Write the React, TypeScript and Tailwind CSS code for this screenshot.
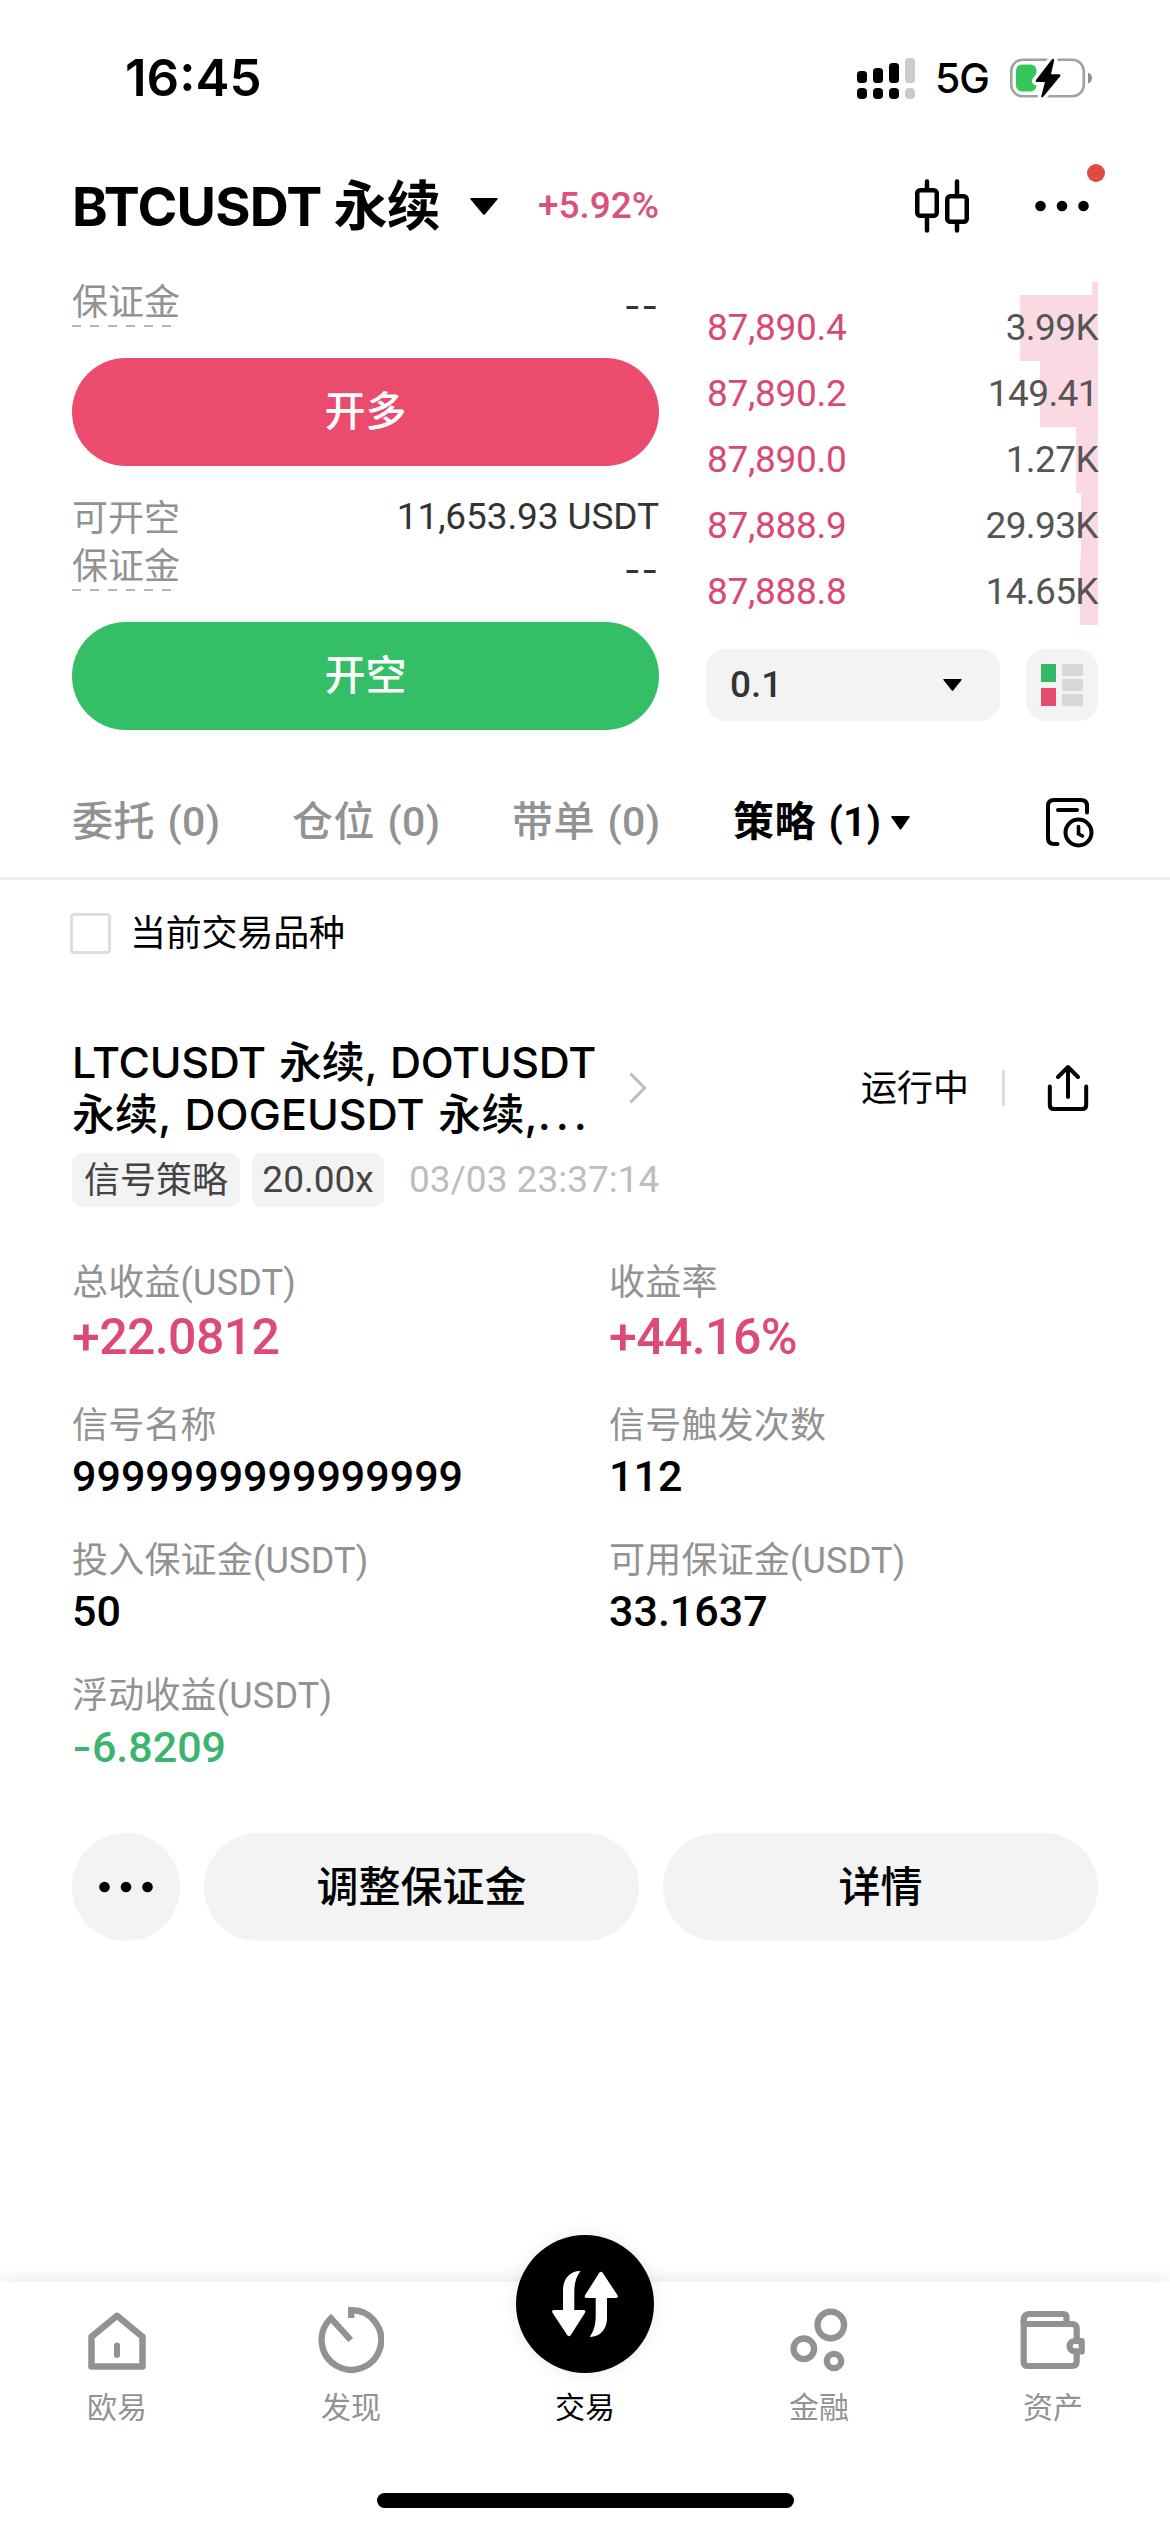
import type { ReactNode } from "react";

function SignalIcon() {
  return (
    <svg className="h-[44px] w-[58px]" viewBox="0 0 58 44">
      <g fill="#000">
        <rect x="0" y="14" width="10" height="12" rx="3.5" />
        <rect x="16" y="11" width="10" height="15" rx="3.5" />
        <rect x="32" y="6" width="10" height="20" rx="3.5" />
        <rect x="0" y="31" width="10" height="11" rx="4" />
        <rect x="16" y="31" width="10" height="11" rx="4" />
        <rect x="32" y="31" width="10" height="11" rx="4" />
      </g>
      <g fill="#cbcbcb">
        <rect x="48" y="1" width="10" height="25" rx="3.5" />
        <rect x="48" y="31" width="10" height="11" rx="4" />
      </g>
    </svg>
  );
}

function BatteryIcon() {
  return (
    <svg className="h-[44px] w-[82px]" viewBox="0 0 82 44">
      <rect x="1.2" y="2.7" width="72.6" height="36.6" rx="11.5" fill="#fff" stroke="#a0a0a0" strokeWidth="2.6" />
      <path d="M78 15.500q4 1.500 4 5.500t-4 5.500z" fill="#8e8e8e" />
      <rect x="6" y="7.500" width="20.500" height="27" rx="6" fill="#35c759" />
      <path
        d="M42 2.200 25.800 23.200q-.8 1.800 1.200 1.800H35L31.200 39.500q.6 1.800 2 .3L50.200 19.200q.9-1.900-1-2H41L44.200 3.200q-.6-2-2.200-1z"
        fill="#000"
        stroke="#fff"
        strokeWidth="7"
        strokeLinejoin="round"
      />
      <path
        d="M42 2.200 25.800 23.200q-.8 1.800 1.200 1.800H35L31.200 39.500q.6 1.800 2 .3L50.200 19.200q.9-1.900-1-2H41L44.200 3.200q-.6-2-2.200-1z"
        fill="#000"
      />
    </svg>
  );
}

function CandlesIcon() {
  return (
    <svg className="h-[54px] w-[54px]" viewBox="0 0 54 54" fill="none" stroke="#000" strokeWidth="4.500" strokeLinecap="round">
      <rect x="2.250" y="11.250" width="19.500" height="25.500" rx="3" />
      <path d="M12 2.500V10M12 38v13.500" />
      <rect x="32.250" y="17.250" width="19.500" height="25.500" rx="3" />
      <path d="M42 2.500V16M42 44v7.500" />
    </svg>
  );
}

function DotsIcon() {
  return (
    <svg className="h-[12px] w-[54px]" viewBox="0 0 54 12">
      <circle cx="5.500" cy="6" r="5.300" />
      <circle cx="27" cy="6" r="5.300" />
      <circle cx="48.500" cy="6" r="5.300" />
    </svg>
  );
}

function Caret({ className }: { className: string }) {
  return (
    <svg className={className} viewBox="0 0 26 17" preserveAspectRatio="none">
      <path d="M1.500 0h23q2 0 .9 1.500L14 16.200q-1 1-2 0L.6 1.500Q-.5 0 1.500 0z" />
    </svg>
  );
}

function HistoryIcon() {
  return (
    <svg className="h-[50px] w-[48px]" viewBox="0 0 48 50" fill="none" stroke="#000" strokeWidth="4" strokeLinecap="round">
      <path d="M11.500 46H8q-6 0-6-6V8q0-6 6-6h27q6 0 6 6v6.500M12 12h19" />
      <circle cx="32.500" cy="34.500" r="13" />
      <path d="M32.500 28.500v7.500l4 2" strokeWidth="3.600" />
    </svg>
  );
}

function ShareIcon() {
  return (
    <svg className="h-[48px] w-[42px]" viewBox="0 0 42 48" fill="none" stroke="#000" strokeWidth="4" strokeLinecap="round">
      <path d="M2.800 22.500V41q0 4 4 4h28.400q4 0 4-4V22.500" />
      <path d="M21 33V3M11 13 21 3l10 10" strokeLinejoin="round" />
    </svg>
  );
}

function HomeIcon() {
  return (
    <svg className="h-[66px] w-[66px]" viewBox="0 0 66 66" fill="none" stroke="#929292" strokeWidth="6.500" strokeLinejoin="round">
      <path d="M7.500 29.800 33 8.800l25.500 21v29.700h-51z" />
      <path d="M33 38.500v9.500" strokeLinecap="round" strokeWidth="6" />
    </svg>
  );
}

function DiscoverIcon() {
  return (
    <svg className="h-[66px] w-[66px]" viewBox="0 0 66 66" fill="none" stroke="#929292" strokeWidth="6.300">
      <path d="M33.200 11V3.200A29.800 29.800 0 1 1 13 11.300L32.700 33" strokeLinejoin="miter" />
    </svg>
  );
}

function FinanceIcon() {
  return (
    <svg className="h-[66px] w-[66px]" viewBox="0 0 66 66" fill="none" stroke="#929292" strokeWidth="6.300">
      <circle cx="44.800" cy="18" r="13.300" />
      <circle cx="17.800" cy="41.800" r="10.300" />
      <circle cx="48" cy="54" r="7.200" />
    </svg>
  );
}

function WalletIcon() {
  return (
    <svg className="h-[66px] w-[68px]" viewBox="0 0 68 66" fill="none" stroke="#929292" strokeWidth="6.200">
      <path d="M4.700 17V13q0-6 6-6h33.500q3.300 0 3.300 3.300V17" />
      <path d="M4.700 12v43q0 4 4 4h44q5 0 5-5V22q0-5-5-5h-48" />
      <path d="M62.700 34v10.400h-7a5.200 5.200 0 0 1 0-10.400z" fill="#fff" strokeLinejoin="round" />
    </svg>
  );
}

function SwapArrows() {
  return (
    <svg className="h-[138px] w-[138px]" viewBox="0 0 138 138" fill="#fff">
      <path d="M64.500 36C53 36 47 45 47 55v20H38q-3 .6-1.500 2.800L51.500 100.500q1.500 1.500 3 0L69 77.800q1-2.300-1-2.800H58.300V57c0-9 2-15.500 6.200-21z" />
      <path d="M73.500 102c11.500 0 17.500-9 17.500-19V63h9q3-.6 1.500-2.800L86.500 37.500q-1.500-1.500-3 0L69 60.200Q68 62.500 70 63h9.700v18c0 9-2 15.500-6.200 21z" />
    </svg>
  );
}

function MarginRow() {
  return (
    <div className="flex h-[45px] items-start justify-between text-[36px] leading-[36px]">
      <div className="flex flex-col gap-[4px] pt-[2px]">
        <span className="text-[#929292]">保证金</span>
        <div className="flex gap-[9px]">
          {[0, 1, 2, 3, 4, 5].map((i) => (
            <div key={i} className="h-[2px] w-[9px] bg-[#b5b5b5]" />
          ))}
        </div>
      </div>
      <span className="pt-[5px] font-['Inter'] tracking-[1px] text-[#333]">--</span>
    </div>
  );
}

const asks = [
  { price: "87,890.4", qty: "3.99K", depth: 78 },
  { price: "87,890.2", qty: "149.41", depth: 58 },
  { price: "87,890.0", qty: "1.27K", depth: 22 },
  { price: "87,888.9", qty: "29.93K", depth: 17 },
  { price: "87,888.8", qty: "14.65K", depth: 18 },
];

function OrderBook() {
  return (
    <div className="flex w-[392px] flex-col pt-[29px]">
      <div className="h-[13px] w-[6px] self-end bg-[#fbd9e3]" />
      {asks.map((a) => (
        <div key={a.price} className="relative flex h-[66px] items-center justify-between pl-[1px] text-[37px]">
          <div className="absolute inset-y-0 right-0 bg-[#fbd9e3]" style={{ width: a.depth }} />
          <span className="tracking-[-0.3px] text-[#d84a73]">{a.price}</span>
          <span className="relative tracking-[-0.6px] text-[#555]">{a.qty}</span>
        </div>
      ))}
      <div className="mt-[24px] flex h-[72px] justify-between">
        <div className="flex w-[294px] items-center justify-between rounded-[20px] bg-[#f3f3f3] pr-[38px] pl-[24px]">
          <span className="text-[37px] font-medium text-[#333]">0.1</span>
          <Caret className="h-[12px] w-[19px]" />
        </div>
        <div className="flex w-[72px] items-center justify-center gap-[6px] rounded-[20px] bg-[#f3f3f3]">
          <div className="flex flex-col gap-[6px]">
            <div className="h-[18px] w-[15px] bg-[#35b968]" />
            <div className="h-[18px] w-[15px] bg-[#e64a6e]" />
          </div>
          <div className="flex flex-col gap-[3px]">
            <div className="h-[12px] w-[21px] bg-[#d8d8d8]" />
            <div className="h-[12px] w-[21px] bg-[#d8d8d8]" />
            <div className="h-[12px] w-[21px] bg-[#d8d8d8]" />
          </div>
        </div>
      </div>
    </div>
  );
}

function Stat({ label, value, className }: { label: string; value: ReactNode; className: string }) {
  return (
    <div className="flex flex-col gap-[4px] pt-px">
      <div className="text-[36px] leading-[44px] tracking-[0.2px] text-[#929292]">{label}</div>
      <div className={className}>{value}</div>
    </div>
  );
}

const big = "text-[50px] leading-[56px] font-medium tracking-[-0.6px] text-[#dc4b74]";
const normal = "text-[43px] leading-[48px] font-medium text-black";
const negative = "text-[43px] leading-[48px] font-medium text-[#3bb56d]";

function NavItem({ icon, label }: { icon: ReactNode; label: string }) {
  return (
    <div className="flex w-[234px] flex-col items-center pt-[25px]">
      {icon}
      <span className="mt-[17px] text-[30px] leading-[36px] text-[#929292]">{label}</span>
    </div>
  );
}

export default function App() {
  return (
    <div className="flex h-[2532px] w-[1170px] flex-col overflow-hidden bg-white font-['Roboto','Noto_Sans_CJK_SC',sans-serif] text-black">
      <div className="flex h-[157px] items-center justify-between pr-[78px] pl-[125px] font-['Inter']">
        <span className="text-[51px] font-semibold">16:45</span>
        <div className="flex items-center">
          <SignalIcon />
          <span className="ml-[20px] text-[41px] font-medium tracking-[-1px]">5G</span>
          <div className="ml-[21px] flex">
            <BatteryIcon />
          </div>
        </div>
      </div>

      <header className="flex h-[96px] items-center justify-between pt-[2px] pr-[81px] pl-[72px]">
        <div className="flex items-center">
          <h1 className="font-['Inter','Noto_Sans_CJK_SC'] text-[54px] font-bold tracking-[-0.8px]">BTCUSDT 永续</h1>
          <Caret className="ml-[30px] h-[17px] w-[28px]" />
          <span className="ml-[40px] text-[37px] font-medium text-[#d9527b]">+5.92%</span>
        </div>
        <div className="flex items-center gap-[66px]">
          <CandlesIcon />
          <div className="relative flex">
            <DotsIcon />
            <div className="absolute -top-[36px] -right-[16px] size-[18px] rounded-full bg-[#df4b41]" />
          </div>
        </div>
      </header>

      <section className="flex h-[513px] justify-between px-[72px]">
        <div className="flex w-[587px] flex-col pt-[30px]">
          <MarginRow />
          <button className="mt-[30px] h-[108px] rounded-full bg-[#eb4b6d] pt-[2px] text-[41px] font-medium text-white">开多</button>
          <div className="mt-[33px] mb-[12px] flex justify-between leading-[36px]">
            <span className="pt-[2px] text-[36px] text-[#929292]">可开空</span>
            <span className="text-[37px] tracking-[-0.1px] text-[#333]">11,653.93 USDT</span>
          </div>
          <div className="-mt-[2px]">
            <MarginRow />
          </div>
          <button className="mt-[30px] h-[108px] rounded-full bg-[#34be66] pt-[2px] text-[41px] font-medium text-white">开空</button>
        </div>
        <OrderBook />
      </section>

      <nav className="flex h-[114px] items-center justify-between border-b-[3px] border-[#eeeeee] pt-[2px] pr-[76px] pl-[72px] text-[41px]">
        <div className="flex items-center gap-[74px] font-medium tracking-[0.4px] text-[#929292] [word-spacing:2px]">
          <span className="w-[146px] whitespace-nowrap">委托 (0)</span>
          <span className="w-[146px] whitespace-nowrap">仓位 (0)</span>
          <span className="w-[147px] whitespace-nowrap">带单 (0)</span>
          <div className="flex items-center gap-[9px] font-semibold whitespace-nowrap text-black">
            <span>策略 (1)</span>
            <Caret className="h-[14px] w-[19px]" />
          </div>
        </div>
        <HistoryIcon />
      </nav>

      <label className="flex h-[106px] items-center gap-[19px] pl-[70px] text-[36px] tracking-[-0.2px]">
        <span className="size-[41px] rounded-[4px] border-[3px] border-[#dedede]" />
        <span className="pt-[2px]">当前交易品种</span>
      </label>

      <article className="flex flex-col px-[72px] pt-[50px]">
        <div className="flex items-center justify-between">
          <div className="flex items-center gap-[33px]">
            <h2 className="w-[524px] font-['Inter','Noto_Sans_CJK_SC'] text-[43px] leading-[52px] font-medium tracking-[-0.3px] [word-spacing:2px] whitespace-nowrap">
              LTCUSDT 永续, DOTUSDT
              <br />
              <span className="tracking-[0.1px]">永续, DOGEUSDT 永续,</span>
              <span className="tracking-[5px]">...</span>
            </h2>
            <svg className="h-[32px] w-[18px]" viewBox="0 0 18 32" fill="none" stroke="#bdbdbd" strokeWidth="3">
              <path d="m1.500 1.500 14 14.500-14 14.500" />
            </svg>
          </div>
          <div className="flex items-center pr-[9px]">
            <span className="pt-[2px] text-[36px]">运行中</span>
            <div className="mr-[42px] ml-[33px] h-[36px] w-[3px] bg-[#dcdcdc]" />
            <ShareIcon />
          </div>
        </div>

        <div className="mt-[13px] flex h-[54px] items-center text-[36px]">
          <span className="flex h-[54px] w-[168px] items-center justify-center rounded-[9px] bg-[#f3f3f3] pt-px text-[#444]">信号策略</span>
          <span className="ml-[12px] flex h-[54px] w-[132px] items-center justify-center rounded-[9px] bg-[#f3f3f3] text-[37px] text-[#444]">20.00x</span>
          <span className="ml-[25px] text-[37px] text-[#bdbdbd]">03/03 23:37:14</span>
        </div>

        <div className="mt-[53px] grid grid-cols-[537px_1fr] gap-y-[38px]">
          <Stat label="总收益(USDT)" value="+22.0812" className={big} />
          <Stat label="收益率" value="+44.16%" className={big} />
          <Stat label="信号名称" value="9999999999999999" className={normal} />
          <Stat label="信号触发次数" value="112" className={normal} />
          <Stat label="投入保证金(USDT)" value="50" className={normal} />
          <Stat label="可用保证金(USDT)" value="33.1637" className={normal} />
          <Stat
            label="浮动收益(USDT)"
            value={
              <>
                <span className="font-['Inter']">-</span>6.8209
              </>
            }
            className={negative}
          />
        </div>

        <div className="mt-[62px] flex h-[108px] gap-[24px] text-[42px] font-medium">
          <button className="flex w-[108px] items-center justify-center rounded-full bg-[#f3f3f3]">
            <DotsIcon />
          </button>
          <button className="flex-1 rounded-full bg-[#f3f3f3]">调整保证金</button>
          <button className="flex-1 rounded-full bg-[#f3f3f3]">详情</button>
        </div>
      </article>

      <footer className="relative mt-auto h-[250px] bg-white shadow-[0_-3px_18px_rgba(0,0,0,0.09)]">
        <div className="flex h-[211px]">
          <NavItem icon={<HomeIcon />} label="欧易" />
          <NavItem icon={<DiscoverIcon />} label="发现" />
          <div className="flex w-[234px] flex-col items-center">
            <div className="-mt-[47px] size-[138px] rounded-full bg-black shadow-[0_0_18px_rgba(0,0,0,0.08)]">
              <SwapArrows />
            </div>
            <span className="mt-[17px] text-[30px] leading-[36px]">交易</span>
          </div>
          <NavItem icon={<FinanceIcon />} label="金融" />
          <NavItem icon={<WalletIcon />} label="资产" />
        </div>
        <div className="mx-auto h-[15px] w-[417px] rounded-full bg-black" />
      </footer>
    </div>
  );
}
